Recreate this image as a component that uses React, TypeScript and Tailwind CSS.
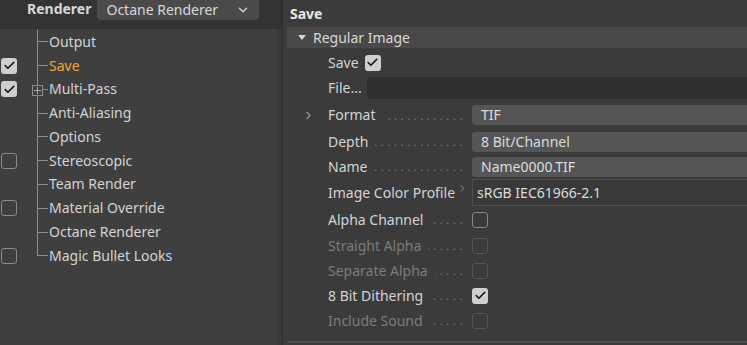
import { ChevronDown, ChevronRight, Check } from "lucide-react";

type TreeItem = {
  label: string;
  box?: "on" | "off";
  active?: boolean;
  plus?: boolean;
};

const treeItems: TreeItem[] = [
  { label: "Output" },
  { label: "Save", box: "on", active: true },
  { label: "Multi-Pass", box: "on", plus: true },
  { label: "Anti-Aliasing" },
  { label: "Options" },
  { label: "Stereoscopic", box: "off" },
  { label: "Team Render" },
  { label: "Material Override", box: "off" },
  { label: "Octane Renderer" },
  { label: "Magic Bullet Looks", box: "off" },
];

const Box = ({ on, dim }: { on?: boolean; dim?: boolean }) =>
  on ? (
    <div className="flex h-[16px] w-[16px] shrink-0 items-center justify-center rounded-[3px] bg-[#cfcfcf]">
      <Check size={13} strokeWidth={3} className="text-[#111]" />
    </div>
  ) : (
    <div
      className={
        dim
          ? "h-[16px] w-[16px] shrink-0 rounded-[3px] border border-[#565656]"
          : "h-[16px] w-[16px] shrink-0 rounded-[3px] border border-[#8a8a8a]"
      }
    />
  );

// dotted leader, rtl so that every row's dots end in the same place
const Dots = () => (
  <div className="ml-[7px] mr-[6px] min-w-0 flex-1 overflow-hidden whitespace-nowrap text-[11px] tracking-[3.6px] text-[#808080] [direction:rtl]">
    {"........................................"}
  </div>
);

const Field = ({ value }: { value: string }) => (
  <div className="flex h-[20px] w-[275px] shrink-0 items-center rounded-l-[3px] bg-[#555555] pl-[9px] text-[#dcdcdc]">
    {value}
  </div>
);

const LeftPanel = () => (
  <div className="flex w-[282px] shrink-0 flex-col">
    <div className="flex h-[29px] items-start bg-[#333333]">
      <span className="ml-[27px] mt-[2px] font-bold text-[#d8d8d8]">Renderer</span>
      <div className="ml-[6px] flex h-[20px] w-[162px] items-center justify-between rounded-b-[4px] bg-[#4a4a4a] pl-[9px] pr-[9px] text-[#d8d8d8]">
        <span>Octane Renderer</span>
        <ChevronDown size={14} strokeWidth={2.5} className="text-[#cfcfcf]" />
      </div>
    </div>
    <div className="flex flex-1">
      <div className="w-[278px] bg-[#3f3f3f] pt-[1px]">
        {treeItems.map((item, i) => {
          const last = i === treeItems.length - 1;
          return (
            <div key={item.label} className="flex h-[23.78px] items-stretch">
              <div className="flex w-[37px] items-center pl-[1px]">
                {item.box && <Box on={item.box === "on"} />}
              </div>
              <div className="relative flex w-[11px] flex-col">
                <div className="flex-1 border-b border-l border-[#8c8c8c]" />
                <div className={last ? "flex-1" : "flex-1 border-l border-[#8c8c8c]"} />
                {item.plus && (
                  <div className="absolute left-[-5px] top-[7px] flex h-[11px] w-[11px] items-center justify-center border border-[#8c8c8c] bg-[#3f3f3f]">
                    <div className="relative h-[7px] w-[7px]">
                      <div className="absolute left-0 top-[3px] h-[1px] w-[7px] bg-[#aaa]" />
                      <div className="absolute left-[3px] top-0 h-[7px] w-[1px] bg-[#aaa]" />
                    </div>
                  </div>
                )}
              </div>
              <div
                className={
                  item.active
                    ? "flex items-center pl-[1px] text-[#f2a33c]"
                    : "flex items-center pl-[1px] text-[#d4d4d4]"
                }
              >
                {item.label}
              </div>
            </div>
          );
        })}
      </div>
      <div className="w-[4px] bg-[#383838]" />
    </div>
  </div>
);

type Row = {
  label: string;
  h: string;
  value?: string;
  on?: boolean;
  dim?: boolean;
  chevron?: boolean;
};

const fieldRows: Row[] = [
  { label: "Format", h: "h-[28px]", value: "TIF", chevron: true },
  { label: "Depth", h: "h-[25px]", value: "8 Bit/Channel" },
  { label: "Name", h: "h-[25px]", value: "Name0000.TIF" },
];

const boxRows: Row[] = [
  { label: "Alpha Channel", h: "h-[27px]" },
  { label: "Straight Alpha", h: "h-[25px]", dim: true },
  { label: "Separate Alpha", h: "h-[25px]", dim: true },
  { label: "8 Bit Dithering", h: "h-[25px]", on: true },
  { label: "Include Sound", h: "h-[25px]", dim: true },
];

const RightPanel = () => (
  <div className="flex min-w-0 flex-1 flex-col overflow-hidden border-l border-[#2c2c2c] bg-[#3b3b3b]">
    <div className="flex h-[27px] items-center pl-[7px] font-bold text-[#e8e8e8]">
      Save
    </div>
    <div className="ml-[4px] flex h-[21px] items-center bg-[#484848] text-[#d8d8d8]">
      <svg width="8" height="5" viewBox="0 0 8 5" className="ml-[11px] mr-[7px]">
        <path d="M0 0 L8 0 L4 5 Z" fill="#d8d8d8" />
      </svg>
      Regular Image
    </div>
    <div className="flex min-w-0 flex-1 flex-col pl-[45px] pt-[2px] text-[#d4d4d4]">
      <div className="flex h-[25px] items-center gap-[6px]">
        <span>Save</span>
        <Box on />
      </div>
      <div className="flex h-[26px] items-center gap-[5px]">
        <span>File...</span>
        <div className="h-[22px] flex-1 rounded-l-[4px] bg-[#2f2f2f]" />
      </div>
      {fieldRows.map((r) => (
        <div key={r.label} className={`relative flex items-center ${r.h}`}>
          {r.chevron && (
            <ChevronRight
              size={13}
              strokeWidth={2}
              className="absolute left-[-26px] text-[#9a9a9a]"
            />
          )}
          <span className="shrink-0">{r.label}</span>
          <Dots />
          <Field value={r.value ?? ""} />
        </div>
      ))}
      <div className="flex h-[27px] items-center">
        <span className="shrink-0">Image Color Profile</span>
        <div className="flex w-0 flex-1 justify-end pr-[4px]">
          <ChevronRight size={11} strokeWidth={2} className="-translate-y-[4px] text-[#9a9a9a]" />
        </div>
        <div className="flex h-[27px] w-[275px] shrink-0 items-center border-y border-l border-[#4e4e4e] bg-[#393939] pl-[4px] text-[#dcdcdc]">
          sRGB IEC61966-2.1
        </div>
      </div>
      {boxRows.map((r) => (
        <div
          key={r.label}
          className={`flex items-center ${r.h} ${r.dim ? "text-[#7c7c7c]" : "text-[#d4d4d4]"}`}
        >
          <span className="shrink-0">{r.label}</span>
          <Dots />
          <div className="w-[275px] shrink-0">
            <Box on={r.on} dim={r.dim} />
          </div>
        </div>
      ))}
    </div>
    <div className="ml-[4px] h-[4px] border-t-2 border-[#4f4f4f]" />
  </div>
);

export default function App() {
  return (
    <div
      className="flex h-[345px] w-[747px] overflow-hidden bg-[#3b3b3b] text-[14px] leading-none"
      style={{ fontFamily: '"Noto Sans", "Open Sans", sans-serif' }}
    >
      <LeftPanel />
      <RightPanel />
    </div>
  );
}
